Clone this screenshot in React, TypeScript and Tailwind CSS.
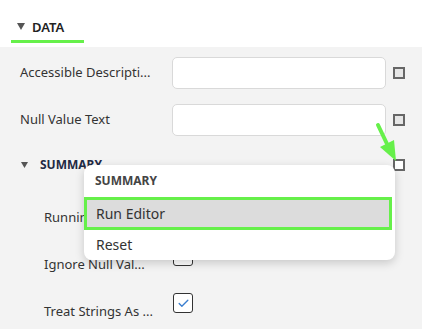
import { Check } from 'lucide-react'

const font = { fontFamily: '"Segoe UI", "Noto Sans", sans-serif' }

// Small square toggle at the end of a property row
function ResetBox({ white }: { white?: boolean }) {
  return (
    <div
      className={`w-[12px] h-[12px] border-2 border-[#666] ${white ? 'bg-white' : 'bg-[#e6e6e6]'}`}
    />
  )
}

function TextRow({ label }: { label: string }) {
  return (
    <div className="flex items-center h-[47px] pl-[20px]">
      <div className="w-[152px] text-[13px] text-[#333] whitespace-nowrap">{label}</div>
      <div className="w-[214px] h-[32px] bg-white border border-[#d9d9d9] rounded-[5px]" />
      <div className="ml-[7px]">
        <ResetBox />
      </div>
    </div>
  )
}

function CheckRow({ label, checked }: { label: string; checked?: boolean }) {
  return (
    <div className="flex items-start h-[47px] pl-[44px]">
      <div className="w-[129px] pt-[15px] text-[13px] leading-[18px] text-[#333] whitespace-nowrap">
        {label}
      </div>
      <div className="mt-[6px] w-[20px] h-[20px] border border-[#333] rounded-[3px] bg-white flex items-center justify-center">
        {checked && <Check className="w-[13px] h-[13px] text-[#3b7fd0]" strokeWidth={2.5} />}
      </div>
    </div>
  )
}

export default function App() {
  return (
    <div className="relative w-[422px] h-[329px] overflow-hidden bg-[#f3f3f3]" style={font}>
      {/* Header */}
      <div className="h-[47px] bg-white pl-[11px] pt-[12px]">
        <div className="inline-flex flex-col">
          <div className="flex items-center gap-[7px] pl-[6px] pr-[20px]">
            <svg width="8" height="7" viewBox="0 0 8 7">
              <path d="M0 0 H8 L4 7 Z" fill="#555" />
            </svg>
            <span className="text-[13px] font-semibold text-[#222] leading-[18px]">DATA</span>
          </div>
          <div className="mt-[4px] h-[3px] bg-[#66f04a]" />
        </div>
      </div>

      {/* Properties */}
      <div className="pt-[2px]">
        <TextRow label="Accessible Descripti..." />
        <TextRow label="Null Value Text" />

        <div className="flex items-center h-[44px] pl-[21px]">
          <svg width="7" height="6" viewBox="0 0 7 6">
            <path d="M0 0 H7 L3.5 6 Z" fill="#555" />
          </svg>
          <span className="ml-[12px] text-[12px] font-bold text-[#1f2a44]">SUMMARY</span>
          <div className="ml-auto mr-[17px]">
            <ResetBox white />
          </div>
        </div>

        <div className="mt-[6px]">
          <CheckRow label="Running Total" />
          <CheckRow label="Ignore Null Val..." />
          <CheckRow label="Treat Strings As ..." checked />
        </div>
      </div>

      {/* Context menu */}
      <div className="absolute left-[84px] top-[165px] w-[311px] h-[95px] bg-white rounded-[8px] shadow-[0_3px_10px_rgba(0,0,0,0.18)]">
        <div className="h-[32px] flex items-center pl-[11px] text-[12px] font-bold text-[#444]">
          SUMMARY
        </div>
        <div className="h-[33px] w-[308px] bg-[#dcdcdc] border-[3px] border-[#66f04a] flex items-center pl-[9px] text-[14px] text-[#333]">
          Run Editor
        </div>
        <div className="h-[28px] flex items-center pl-[12px] text-[14px] text-[#333]">Reset</div>
      </div>

      {/* Annotation arrow */}
      <svg className="absolute left-0 top-0" width="422" height="329" viewBox="0 0 422 329">
        <line x1="378" y1="125" x2="388" y2="146" stroke="#66f04a" strokeWidth="4" strokeLinecap="round" />
        <path d="M380 147 L394 140 L396 161 Z" fill="#66f04a" />
      </svg>
    </div>
  )
}
